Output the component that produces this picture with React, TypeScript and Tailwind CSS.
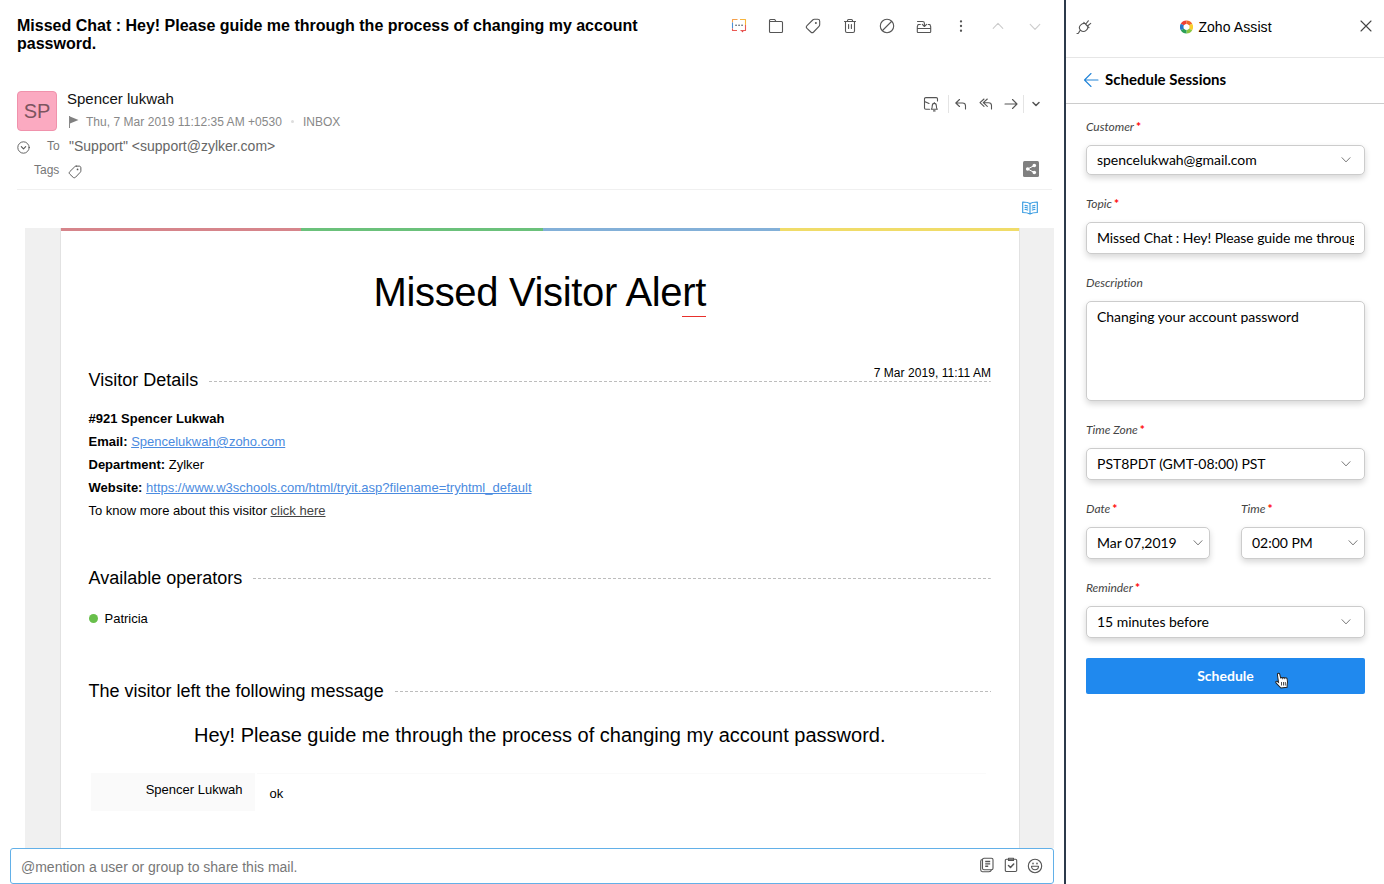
import { ReactNode } from "react";
import clsx from "clsx";

type IconProps = { className?: string; children: ReactNode; size?: number; box?: string };

const Icon = ({ className, children, size = 16, box }: IconProps) => (
  <svg
    width={size}
    height={size}
    viewBox={box ?? `0 0 ${size} ${size}`}
    fill="none"
    stroke="currentColor"
    strokeWidth={1.1}
    strokeLinecap="round"
    strokeLinejoin="round"
    className={clsx("block shrink-0", className)}
  >
    {children}
  </svg>
);

const TagIcon = ({ size = 16 }: { size?: number }) => (
  <Icon size={size} box="0 0 16 16">
    <path d="M9.4 1.3h3.4c1.1 0 1.9.8 1.900 1.900v3.400c0 .7-.2 1.200-.7 1.700l-5.400 5.700c-.8.8-2 .8-2.800 0l-3.800-3.600c-.8-.8-.8-2 0-2.800L7.700 2c.5-.5 1-.7 1.700-.7z" />
    <circle cx="10.900" cy="5.100" r="1" fill="currentColor" stroke="none" />
  </Icon>
);

const ChevronDown = ({ className }: { className?: string }) => (
  <Icon size={10} className={className}>
    <path d="M1 2.700 5 6.900l4-4.200" strokeWidth={1} />
  </Icon>
);

const toolbar = [
  {
    name: "chat",
    icon: (
      <Icon>
        <g strokeWidth={1.1} strokeLinecap="butt">
          <path d="M1.500 4.500v-3h5" stroke="#f5a04b" />
          <path d="M1.500 4.500v6" stroke="#4a8fd6" />
          <path d="M9 1.500h5.500V7" stroke="#f7b53d" />
          <path d="M14.500 7v5.500H9.500M1.500 10.500v2H6" stroke="#ea5a55" />
          <path d="M10.300 13h2.400l-1.200 1.500z" fill="#e0454b" stroke="none" />
        </g>
        <path d="M5 7.200h.1M8 7.200h.1M11 7.200h.1" stroke="#3f4b55" strokeWidth={1.500} />
      </Icon>
    ),
  },
  {
    name: "folder",
    icon: (
      <Icon>
        <path d="M1.500 13.500v-11c0-.6.400-1 1-1h4.200l1.300 2h5.500c.6 0 1 .4 1 1v9c0 .6-.4 1-1 1h-11c-.6 0-1-.4-1-1zM1.500 3.500H8" />
      </Icon>
    ),
  },
  { name: "tag", icon: <TagIcon /> },
  {
    name: "trash",
    icon: (
      <Icon>
        <path d="M2.500 3.500h11M5.500 3.500v-1c0-.6.400-1 1-1h3c.6 0 1 .4 1 1v1M3.500 3.500v9.500c0 .8.600 1.500 1.500 1.500h6c.9 0 1.500-.7 1.500-1.500V3.500M6.600 6.500v4M9.400 6.500v4" />
      </Icon>
    ),
  },
  {
    name: "block",
    icon: (
      <Icon>
        <circle cx="8" cy="8" r="6.700" />
        <path d="M3.500 12.500l9-9" />
      </Icon>
    ),
  },
  {
    name: "archive",
    icon: (
      <Icon>
        <path d="M1.300 10.500h13.400v3.200c0 .5-.4.800-.8.800H2.100c-.4 0-.8-.3-.8-.8zM1.300 10.500V8.700l.8-2.200h2.200M14.700 10.500V8.700l-.8-2.200h-1.700M1.500 3.500h5c1.200 0 1.900.7 1.900 1.700v3M6.300 6.400l2.100 2.100 2.200-2.100" />
      </Icon>
    ),
  },
  {
    name: "more",
    icon: (
      <Icon>
        <path d="M8 3.300v.1M8 8v.1M8 12.700v.1" strokeWidth={2.300} />
      </Icon>
    ),
  },
  {
    name: "up",
    icon: (
      <Icon className="text-[#ccc]">
        <path d="M3.200 10.300 8 5.400l4.800 4.900" />
      </Icon>
    ),
  },
  {
    name: "down",
    icon: (
      <Icon className="text-[#ccc]">
        <path d="M3.200 6.400 8 11.300l4.800-4.900" />
      </Icon>
    ),
  },
];

const SectionTitle = ({ children, note }: { children: ReactNode; note?: string }) => (
  <div className="relative flex h-6 items-center">
    <h2 className="mr-[11px] text-[18px] whitespace-nowrap">{children}</h2>
    <svg className={clsx("h-px flex-1", note ? "mt-[3px]" : "mt-px")}>
      <line x1="0" y1="0.5" x2="100%" y2="0.5" stroke="#bdbdbd" strokeDasharray="3 2" />
    </svg>
    {note && <span className="absolute -top-1 right-0 text-[12px] tracking-[0.050px]">{note}</span>}
  </div>
);

const MailHeader = () => (
  <header className="mr-3 ml-[17px] h-[190px] border-b border-[#f0f0f0]">
    <div className="flex h-[91px] justify-between pt-[17px]">
      <h1 className="w-[650px] text-[16px] leading-[18px] font-bold">
        Missed Chat : Hey! Please guide me through the process of changing my account
        <br />
        password.
      </h1>
      <div className="flex h-[18px] items-center gap-[21px] pr-[9px] text-[#555]">
        {toolbar.map((item) => (
          <button key={item.name}>{item.icon}</button>
        ))}
      </div>
    </div>
    <div className="flex">
      <div className="flex size-10 items-center justify-center rounded-[4px] border border-[#f092ac] bg-[#fbaac1] text-[20px] text-[#7b555f]">
        SP
      </div>
      <div className="ml-[10px] flex-1">
        <div className="h-4 text-[15px] leading-4 text-[#111]">Spencer lukwah</div>
        <div className="mt-[7px] flex h-[15px] items-center text-[12px] text-[#888]">
          <svg width="10" height="12" className="ml-[2px]">
            <path d="M.5 0v12" stroke="#888" />
            <path d="M1 .5 9.500 4 1 7.500z" fill="#808080" />
          </svg>
          <span className="ml-[7px] tracking-[0.030px]">Thu, 7 Mar 2019 11:12:35 AM +0530</span>
          <span className="mx-[9px] size-[3px] rounded-full bg-[#ddd]" />
          <span>INBOX</span>
        </div>
      </div>
      <div className="flex h-[26px] items-center pr-3 text-[#555]">
        <Icon>
          <path d="M6.500 13.300H2.800c-.7 0-1.300-.5-1.300-1.200V2.800c0-.7.600-1.200 1.300-1.200h10.400c.7 0 1.300.5 1.300 1.200V5M1.500 5.500 6 7.500M8.300 13.300c.8-.6.900-1.500.9-3 0-1.700.8-2.900 2.100-2.900s2.100 1.200 2.100 2.900c0 1.500.1 2.400.9 3zM11.300 7.400v-.8M10.500 14.900h1.600" />
        </Icon>
        <span className="ml-[9px] h-[18px] w-px bg-[#e4e4e4]" />
        <Icon size={12} className="ml-[6px]">
          <path d="M4.500 1.500.8 5l3.700 3.500M.8 5h6.700c1.700 0 3 1 3 2.800V11" />
        </Icon>
        <Icon size={14} className="ml-3">
          <path d="M5 2 1 5.700 5 9.400M8.300 2l-4 3.700 4 3.700M4.300 5.700h5.200c1.700 0 3 1 3 2.800V12" />
        </Icon>
        <Icon size={14} className="ml-[11px]">
          <path d="M1 7h12M8.500 2.500 13 7l-4.500 4.500" />
        </Icon>
        <span className="ml-[5px] h-[18px] w-px bg-[#e4e4e4]" />
        <Icon size={8} className="ml-2">
          <path d="M1 2.500l3 3 3-3" strokeWidth={1.500} />
        </Icon>
      </div>
    </div>
    <div className="mt-[7px] flex h-4 items-center text-[#777]">
      <Icon size={13} className="mt-[2px] text-[#555]">
        <circle cx="6.500" cy="6.500" r="5.700" strokeWidth={0.900} />
        <path d="M4.300 5.600 6.500 7.800l2.200-2.200" />
      </Icon>
      <span className="ml-[17px] w-[13px] text-[12px]">To</span>
      <span className="ml-[9px] text-[14px] text-[#666]">"Support" &lt;support@zylker.com&gt;</span>
    </div>
    <div className="mt-2 flex h-4 items-center text-[#777]">
      <span className="ml-[17px] w-[26px] text-[12px]">Tags</span>
      <span className="mt-[3px] ml-2 text-[#555]">
        <TagIcon size={14} />
      </span>
      <svg width="16" height="16" className="-mt-[2px] mr-[13px] ml-auto">
        <rect width="16" height="16" rx="1.500" fill="#808080" />
        <path d="M11.300 4.500 4.700 8l6.600 3.500" stroke="#fff" fill="none" />
        <circle cx="11.300" cy="4.500" r="1.800" fill="#fff" />
        <circle cx="4.700" cy="8" r="1.800" fill="#fff" />
        <circle cx="11.300" cy="11.500" r="1.800" fill="#fff" />
      </svg>
    </div>
  </header>
);

const MailBody = () => (
  <div className="mr-[10px] ml-[25px] flex h-[620px] bg-[#f0f0f0] pr-[34px] pl-[35px]">
    <article className="w-full overflow-hidden border-x border-[#e2e2e2] bg-white">
      <div className="-mx-px flex h-[3px]">
        <span className="w-[241px] bg-[#d6858b]" />
        <span className="w-[242px] bg-[#6bc17b]" />
        <span className="w-[237px] bg-[#83b0d8]" />
        <span className="flex-1 bg-[#f0dc69]" />
      </div>
      <div className="pr-7 pl-[27.500px]">
        <h1 className="mt-[37px] h-[49px] text-center text-[40px] leading-[48px] tracking-[-0.350px]">
          Missed Visitor Ale<span className="border-b border-[#e8302c] pb-[2px]">rt</span>
        </h1>
        <div className="mt-[51px]">
          <SectionTitle note="7 Mar 2019, 11:11 AM">Visitor Details</SectionTitle>
        </div>
        <div className="mt-[15px] text-[13px] leading-[23px]">
          <p className="font-bold">#921 Spencer Lukwah</p>
          <p>
            <b>Email:</b> <a className="text-[#4b8be0] underline">Spencelukwah@zoho.com</a>
          </p>
          <p>
            <b>Department:</b> Zylker
          </p>
          <p>
            <b>Website:</b>{" "}
            <a className="text-[#4b8be0] underline">https://www.w3schools.com/html/tryit.asp?filename=tryhtml_default</a>
          </p>
          <p>
            To know more about this visitor <a className="text-[#444] underline">click here</a>
          </p>
        </div>
        <div className="mt-11">
          <SectionTitle>Available operators</SectionTitle>
        </div>
        <div className="mt-[20px] flex h-[17px] items-center text-[13px]">
          <span className="mr-[7px] size-[9px] rounded-full bg-[#68bf4b]" />
          Patricia
        </div>
        <div className="mt-[52px]">
          <SectionTitle>The visitor left the following message</SectionTitle>
        </div>
        <p className="mt-5 h-6 text-center text-[20px] leading-6">
          Hey! Please guide me through the process of changing my account password.
        </p>
        <div className="mt-[26px] ml-[2px] flex text-[13px]">
          <div className="h-[38px] w-[164px] bg-[#fafafa] pt-[7px] pr-3 text-right">Spencer Lukwah</div>
          <div className="ml-[2px] w-[729px] border-t border-[#fafafa] pt-[10px] pl-[13px]">ok</div>
        </div>
      </div>
    </article>
  </div>
);

const MentionBox = () => (
  <div className="mr-[10px] ml-[10px] flex h-9 items-center rounded-[3px] border border-[#62b0e8] px-[10px] text-[14px] text-[#777]">
    <span className="flex-1 pt-[2px]">@mention a user or group to share this mail.</span>
    <div className="-mt-[3px] flex items-center gap-2 text-[#555]">
      <Icon>
        <rect x="3.500" y="1.300" width="10.500" height="11.500" rx="1.500" />
        <path d="M3.500 2.500c-1.300 0-1.800.7-1.800 1.800v8.500c0 1.100.7 1.900 1.800 1.900H10c1.200 0 2-.5 2.300-1.700" />
        <path d="M6.200 4.500h5M6.200 6.900h5M6.200 9.300h3" strokeWidth={1.400} strokeLinecap="butt" />
      </Icon>
      <Icon>
        <rect x="2.300" y="2.300" width="11.400" height="12.200" rx="1.200" />
        <path d="M5.500 1.300h5v2.100h-5z" />
        <path d="M5.500 8.500l2 2 3.200-3.400" strokeWidth={1.500} />
      </Icon>
      <Icon className="mt-[2px]">
        <circle cx="8" cy="8" r="6.700" />
        <path d="M4.500 8.300h7c0 2.100-1.500 3.400-3.500 3.400s-3.500-1.300-3.500-3.400z" />
        <path d="M6 5.300v.5M10 5.300v.5" strokeWidth={1.500} />
      </Icon>
    </div>
  </div>
);

const Label = ({ children, required = true }: { children: ReactNode; required?: boolean }) => (
  <label className="flex h-4 text-[12px] leading-4 tracking-[-0.030px] text-[#444] italic">
    {children}
    {required && <span className="ml-[2px] text-[12px] leading-4 font-black text-[#ff1010] not-italic">*</span>}
  </label>
);

const boxStyle = "rounded-[5px] border border-[#ccc] bg-white shadow-[0_3px_6px_rgba(0,0,0,0.16)]";

const Select = ({ value, narrow }: { value: string; narrow?: boolean }) => (
  <div
    className={clsx(
      boxStyle,
      "flex h-full items-center justify-between pl-[10px] text-[14px]",
      narrow ? "pr-[6px]" : "pr-[13px]"
    )}
  >
    <span className="pb-[2px] tracking-[-0.030px]">{value}</span>
    <ChevronDown className="text-[#777]" />
  </div>
);

const HandCursor = () => (
  <svg width="15" height="17" viewBox="0 0 15 17" className="absolute top-[14px] left-[188px]">
    <path
      d="M4.200 10V2.300c0-1.700 2.200-1.700 2.400 0l.4 4c.3-.9 1.800-.8 2 .2.400-.8 1.800-.7 2 .3.500-.6 2-.3 2.200.8.200 2.300 0 4-.7 5.600L12 16H5.800L2 10.700C.7 9 2 7.900 3.300 9z"
      fill="#fff"
      stroke="#222"
      strokeWidth="1"
      transform="rotate(-8 7 8)"
    />
    <path d="M7.500 10v3.500M9.500 10v3.500M11.300 10v3.500" stroke="#222" strokeWidth=".8" />
  </svg>
);

const AssistPanel = () => (
  <aside className="h-full w-[320px] border-l-2 border-[#2c3a4b] font-[Lato,sans-serif]">
    <div className="flex h-[58px] items-center border-b border-[#e6e6e6] px-[10px] pb-[3px] font-['Liberation_Sans',sans-serif]">
      <Icon className="-mt-px text-[#555]">
        <path d="M1 14.500h.8c1.200 0 .7-1.500 2.700-3.300M4.500 11.200c-1.500-1.800-1.300-4 .3-5.400C6.300 4.400 8 4.300 9 4.500l2.800 3c.2 1.200 0 2.500-1.400 3.700-1.700 1.500-4.200 1.600-5.900 0zM7.800 3.300l5.200 5.400M9.800 5l2.500-3.200M11.500 7l3.200-2.700" />
      </Icon>
      <div className="flex flex-1 items-center justify-center gap-[5px] text-[14px]">
        <svg width="13" height="14" viewBox="0 0 14 14" fill="none" strokeWidth="4">
          <path d="M2.600 4.500A5 5 0 0 1 7 2" stroke="#ee4036" />
          <path d="M7 2a5 5 0 0 1 4.400 2.500" stroke="#f2672b" />
          <path d="M11.400 4.500a5 5 0 0 1 0 5" stroke="#f9cf2b" />
          <path d="M11.400 9.500A5 5 0 0 1 7 12" stroke="#8cc63f" />
          <path d="M7 12a5 5 0 0 1-4.400-2.500" stroke="#2b9f56" />
          <path d="M2.600 9.500a5 5 0 0 1 0-5" stroke="#2878c8" />
          <circle cx="7" cy="7" r="3" fill="#fff" />
        </svg>
        <span className="tracking-[0.080px]">Zoho Assist</span>
      </div>
      <Icon size={12} className="-mt-[2px] mr-[2px] text-[#444]">
        <path d="M1 1l10 10M11 1 1 11" />
      </Icon>
    </div>
    <div className="flex h-[46px] items-center border-b border-[#ccc] pb-[2px] pl-[17px]">
      <Icon className="text-[#2485d8]">
        <path d="M15 8H1.500M8 1.500 1.500 8 8 14.500" />
      </Icon>
      <h2 className="ml-[6px] text-[15px] font-bold">Schedule Sessions</h2>
    </div>
    <form className="pt-[15px] pr-[19px] pl-5">
      <Label>Customer</Label>
      <div className="mt-[10px] h-[30px]">
        <Select value="spencelukwah@gmail.com" />
      </div>
      <div className="mt-[21px]">
        <Label>Topic</Label>
      </div>
      <div className={clsx(boxStyle, "mt-[10px] flex h-8 items-center px-[10px] text-[14px]")}>
        <span className="overflow-hidden pb-px tracking-[-0.080px] whitespace-nowrap">Missed Chat : Hey! Please guide me throug</span>
      </div>
      <div className="mt-[21px]">
        <Label required={false}>Description</Label>
      </div>
      <div className={clsx(boxStyle, "mt-[10px] h-[100px] px-[10px] pt-1 text-[14px] tracking-[-0.030px]")}>
        Changing your account password
      </div>
      <div className="mt-[21px]">
        <Label>Time Zone</Label>
      </div>
      <div className="mt-[10px] h-8">
        <Select value="PST8PDT (GMT-08:00) PST" />
      </div>
      <div className="mt-[21px] flex gap-[31px]">
        <div className="w-[124px]">
          <Label>Date</Label>
          <div className="mt-[10px] h-8">
            <Select value="Mar 07,2019" narrow />
          </div>
        </div>
        <div className="w-[124px]">
          <Label>Time</Label>
          <div className="mt-[10px] h-8">
            <Select value="02:00 PM" narrow />
          </div>
        </div>
      </div>
      <div className="mt-[21px]">
        <Label>Reminder</Label>
      </div>
      <div className="mt-[10px] h-8">
        <Select value="15 minutes before" />
      </div>
      <button
        type="button"
        className="relative mt-5 h-9 w-full rounded-[2px] bg-[#2089ee] pb-[2px] text-[14px] font-bold text-white"
      >
        Schedule
        <HandCursor />
      </button>
    </form>
  </aside>
);

export default function App() {
  return (
    <div className="flex h-[884px] w-[1384px] overflow-hidden bg-white font-['Liberation_Sans',Arial,sans-serif] text-black">
      <main className="w-[1064px]">
        <MailHeader />
        <div className="flex h-[38px] items-center justify-end pr-[26px] text-[#2f97e0]">
          <Icon className="-mt-[2px]">
            <path d="M8 3.500C6 2.300 4 2 .7 2v10.500c3.300 0 5.300.3 7.300 1.500 2-1.200 4-1.500 7.300-1.500V2C12 2 10 2.300 8 3.500zM8 3.500V14M3 5.300l2.700.7M3 9.300l2.700.7M13 5.300l-2.700.7M13 9.300l-2.700.7M3 7.300l2.700.7M13 7.300l-2.700.7" />
          </Icon>
        </div>
        <MailBody />
        <MentionBox />
      </main>
      <AssistPanel />
    </div>
  );
}
